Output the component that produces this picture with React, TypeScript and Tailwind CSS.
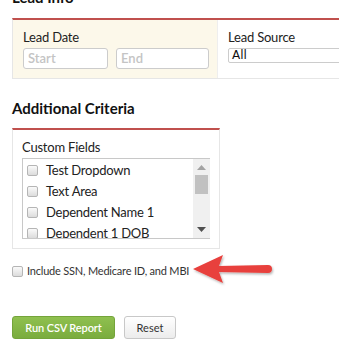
import React from "react";

const font = { fontFamily: "Lato, 'Open Sans', sans-serif" };

function Box() {
  return (
    <span className="inline-block w-[11px] h-[11px] rounded-[2px] border border-[#b5b5b5] bg-gradient-to-b from-[#fafafa] to-[#dcdcdc] shrink-0" />
  );
}

export default function App() {
  const items = ["Test Dropdown", "Text Area", "Dependent Name 1", "Dependent 1 DOB"];
  return (
    <div className="relative w-[339px] h-[350px] overflow-hidden bg-white text-[#222]" style={font}>
      <div className="pl-[12px]">
        <div className="text-[15px] font-bold leading-[20px] -mt-[13px] mb-[11px] text-[#111]">Lead Info</div>
        <div className="flex w-[340px] border-t-2 border-t-[#c0504d] border-l border-b border-[#e6e6e6] h-[61px]">
          <div className="w-[205px] shrink-0 bg-[#fcf8ea] pl-[10px] pt-[9px] border-r border-[#eeeeee]">
            <div className="text-[13px] leading-[16px] tracking-[-0.2px]">Lead Date</div>
            <div className="flex gap-[8px] mt-[3px]">
              <div className="w-[85px] h-[21px] rounded-[3px] border border-[#cccccc] bg-white pl-[4px] text-[13px] leading-[19px] font-semibold text-[#c4c4c4]">Start</div>
              <div className="w-[93px] h-[21px] rounded-[3px] border border-[#cccccc] bg-white pl-[4px] text-[13px] leading-[19px] font-semibold text-[#c4c4c4]">End</div>
            </div>
          </div>
          <div className="flex-1 pl-[10px] pt-[9px] min-w-0">
            <div className="text-[13px] leading-[16px] tracking-[-0.2px]">Lead Source</div>
            <div className="mt-[3px] w-[200px] h-[15px] rounded-[2px] border border-[#cccccc] bg-white pl-[3px] leading-[13px] text-[#111]" style={{ fontFamily: "'DejaVu Sans', sans-serif", fontSize: "12px" }}>All</div>
          </div>
        </div>

        <div className="text-[15px] font-bold leading-[20px] mt-[19px] mb-[10px] text-[#111]">Additional Criteria</div>
        <div className="w-[208px] h-[121px] border-t-2 border-t-[#c0504d] border-l border-r border-b border-[#e6e6e6] pl-[9px] pt-[9px]">
          <div className="text-[13px] leading-[16px] tracking-[-0.2px]">Custom Fields</div>
          <div className="mt-[3px] w-[188px] h-[81px] border border-[#c8c8c8] border-r-0 flex overflow-hidden">
            <div className="flex-1 pl-[4px] pt-[1px]">
              {items.map((t) => (
                <div key={t} className="flex items-center gap-[8px] h-[21px] text-[13px] tracking-[-0.25px] text-[#222]">
                  <Box />
                  <span>{t}</span>
                </div>
              ))}
            </div>
            <div className="w-[17px] bg-[#f0f0f0] relative">
              <svg className="absolute left-[4px] top-[6px]" width="9" height="5" viewBox="0 0 9 5"><path d="M0 5 L4.5 0 L9 5Z" fill="#a3a3a3" /></svg>
              <div className="absolute left-[2px] top-[16px] w-[13px] h-[19px] bg-[#c1c1c1]" />
              <svg className="absolute left-[4px] top-[68px]" width="9" height="5" viewBox="0 0 9 5"><path d="M0 0 L9 0 L4.5 5Z" fill="#505050" /></svg>
            </div>
          </div>
        </div>

        <div className="flex items-center gap-[4px] mt-[15px] text-[11px] leading-[14px] tracking-[-0.2px] text-[#333]">
          <Box />
          <span>Include SSN, Medicare ID, and MBI</span>
        </div>

        <div className="flex gap-[9px] mt-[38px]">
          <div className="w-[103px] h-[23px] rounded-[3px] bg-gradient-to-b from-[#8fc04f] to-[#7aac3e] border border-[#74a43a] text-white text-[11px] leading-[21px] text-center font-semibold tracking-[-0.1px]">Run CSV Report</div>
          <div className="w-[52px] h-[23px] rounded-[3px] bg-gradient-to-b from-[#ffffff] to-[#ececec] border border-[#c8c8c8] text-[#333] text-[11px] leading-[21px] text-center">Reset</div>
        </div>
      </div>

      <svg className="absolute left-[190px] top-[252px]" width="90" height="36" viewBox="0 0 90 36">
        <defs>
          <filter id="sh" x="-20%" y="-30%" width="140%" height="160%">
            <feDropShadow dx="1" dy="1.5" stdDeviation="1.2" floodColor="#000" floodOpacity="0.3" />
          </filter>
        </defs>
        <g filter="url(#sh)" fill="#e8403c">
          <path d="M3 17 L33 3 L29 14 L78 13 Q82 13 82 17 Q82 21 78 21 L29 20 L33 31 Z" />
        </g>
      </svg>
    </div>
  );
}
